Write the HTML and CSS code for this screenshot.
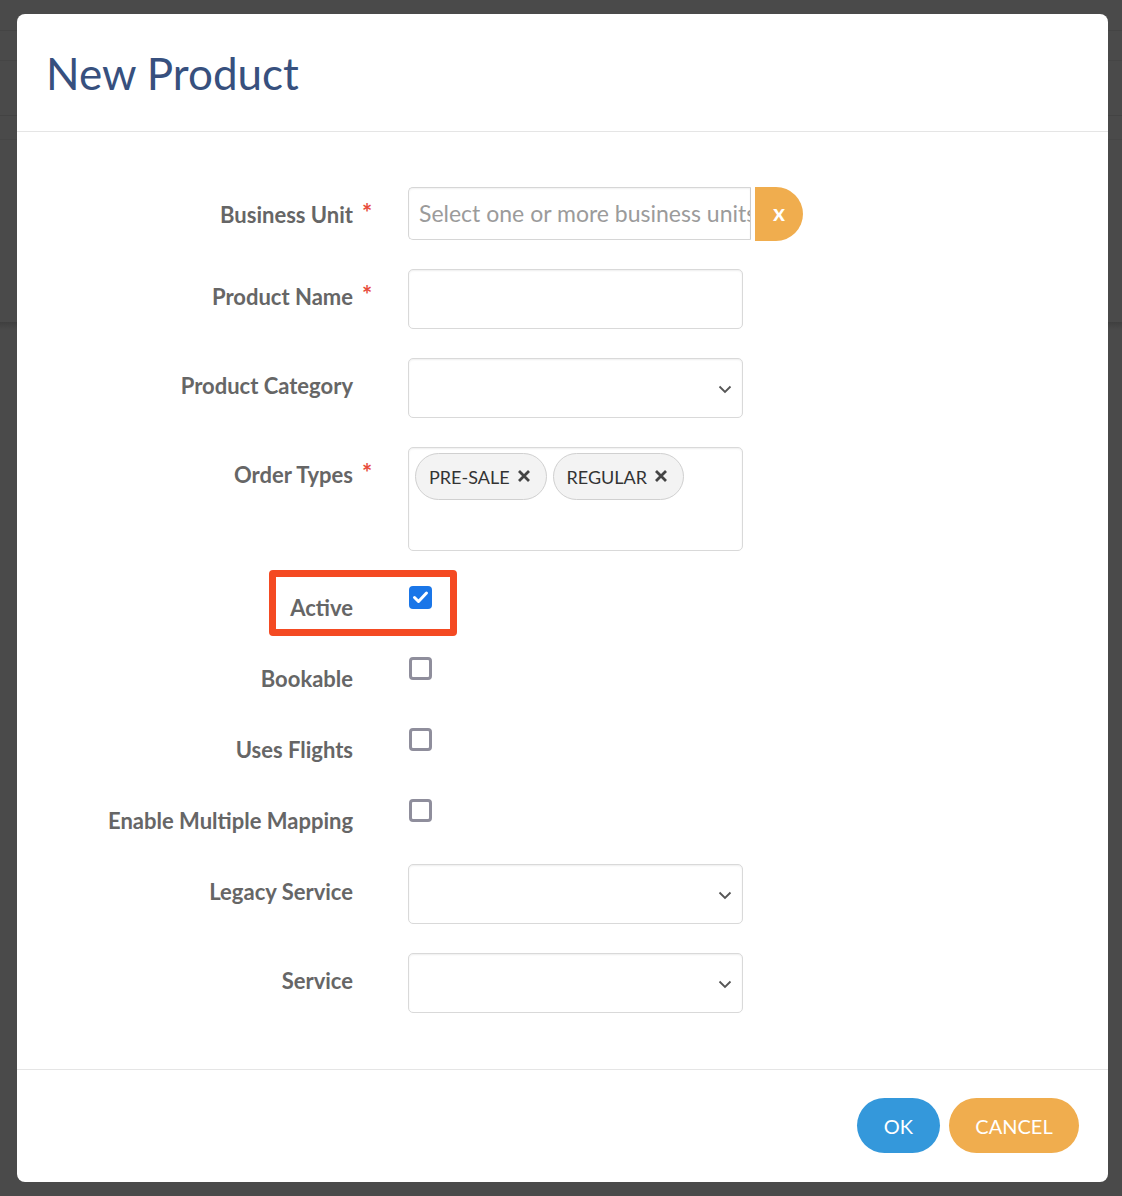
FILE: index.html
```html
<!DOCTYPE html>
<html lang="en">
<head>
  <meta charset="UTF-8">
  <meta name="viewport" content="width=device-width, initial-scale=1.0">
  <title>New Product</title>
  <link rel="stylesheet" href="styles.css">
</head>
<body>

<div class="modal">
  <div class="modal-header">
    <h1 class="modal-title">New Product</h1>
  </div>

  <div class="modal-body">
    <div class="form-row row-bu">
      <label class="form-label">Business Unit</label>
      <span class="req">*</span>
      <div class="bu-group">
        <div class="bu-input">Select one or more business units</div>
        <button class="bu-clear">x</button>
      </div>
    </div>

    <div class="form-row">
      <label class="form-label">Product Name</label>
      <span class="req">*</span>
      <div class="text-input"></div>
    </div>

    <div class="form-row">
      <label class="form-label">Product Category</label>
      <span class="req"></span>
      <div class="text-input select">
        <svg class="chevron" width="14" height="9" viewBox="0 0 14 9"><path d="M1.5 1.5 L7 7 L12.5 1.5" fill="none" stroke="#555" stroke-width="1.8"/></svg>
      </div>
    </div>

    <div class="form-row">
      <label class="form-label">Order Types</label>
      <span class="req">*</span>
      <div class="tags-input">
        <span class="tag">PRE-SALE <svg width="14" height="14" viewBox="0 0 14 14"><path d="M2 2 L12 12 M12 2 L2 12" stroke="#444" stroke-width="2.8"/></svg></span>
        <span class="tag">REGULAR <svg width="14" height="14" viewBox="0 0 14 14"><path d="M2 2 L12 12 M12 2 L2 12" stroke="#444" stroke-width="2.8"/></svg></span>
      </div>
    </div>

    <div class="form-row check-row highlight-row">
      <div class="highlight"></div>
      <label class="form-label">Active</label>
      <span class="req"></span>
      <span class="checkbox checked">
        <svg width="23" height="23" viewBox="0 0 23 23"><path d="M5.5 11.5 L9.5 15.5 L17.5 7" fill="none" stroke="#fff" stroke-width="3" stroke-linecap="round" stroke-linejoin="round"/></svg>
      </span>
    </div>

    <div class="form-row check-row">
      <label class="form-label">Bookable</label>
      <span class="req"></span>
      <span class="checkbox"></span>
    </div>

    <div class="form-row check-row">
      <label class="form-label">Uses Flights</label>
      <span class="req"></span>
      <span class="checkbox"></span>
    </div>

    <div class="form-row check-row">
      <label class="form-label">Enable Multiple Mapping</label>
      <span class="req"></span>
      <span class="checkbox"></span>
    </div>

    <div class="form-row">
      <label class="form-label">Legacy Service</label>
      <span class="req"></span>
      <div class="text-input select">
        <svg class="chevron" width="14" height="9" viewBox="0 0 14 9"><path d="M1.5 1.5 L7 7 L12.5 1.5" fill="none" stroke="#555" stroke-width="1.8"/></svg>
      </div>
    </div>

    <div class="form-row">
      <label class="form-label">Service</label>
      <span class="req"></span>
      <div class="text-input select">
        <svg class="chevron" width="14" height="9" viewBox="0 0 14 9"><path d="M1.5 1.5 L7 7 L12.5 1.5" fill="none" stroke="#555" stroke-width="1.8"/></svg>
      </div>
    </div>
  </div>

  <div class="modal-footer">
    <button class="btn btn-ok">OK</button>
    <button class="btn btn-cancel">CANCEL</button>
  </div>
</div>

</body>
</html>
```

FILE: styles.css
```css
body {
  margin: 0;
  padding: 0;
  font-family: Lato, "Open Sans", Arial, sans-serif;
  background-color: #4a4a4a;
  background-image:
    linear-gradient(#444, #444),
    linear-gradient(#454545, #454545),
    linear-gradient(#434343, #434343),
    linear-gradient(#464646, #464646),
    linear-gradient(#3f3f3f, #4a4a4a);
  background-size: 100% 1px, 100% 1px, 100% 1px, 100% 1px, 100% 8px;
  background-position: 0 30px, 0 60px, 0 115px, 0 139px, 0 322px;
  background-repeat: no-repeat;
  height: 1196px;
  overflow: hidden;
}
.modal {
  margin: 14px 14px 0 17px;
  width: 1091px;
  height: 1168px;
  background: #fff;
  border-radius: 8px;
  display: flex;
  flex-direction: column;
}
.modal-header {
  border-bottom: 1px solid #e5e5e5;
  padding-left: 29px;
  box-sizing: border-box;
  height: 118px;
}
.modal-title {
  margin: 0;
  padding-top: 33px;
  font-size: 44px;
  line-height: 52px;
  font-weight: 400;
  color: #37507e;
}
.modal-body {
  padding-top: 55px;
  flex: 1;
}
.form-row {
  display: flex;
  align-items: flex-start;
  margin-bottom: 29px;
  position: relative;
}
.form-row:last-child {
  margin-bottom: 0;
}
.form-label {
  width: 336px;
  text-align: right;
  font-size: 22px;
  line-height: 26px;
  padding-top: 15px;
  font-weight: 700;
  color: #666;
}
.req {
  width: 55px;
  padding-left: 9px;
  box-sizing: border-box;
  color: #e74c3c;
  font-size: 24px;
  font-weight: 700;
  line-height: 24px;
  padding-top: 14px;
}
.bu-group {
  display: flex;
  height: 53px;
}
.bu-input {
  width: 343px;
  height: 53px;
  box-sizing: border-box;
  border: 1px solid #d6d6d6;
  border-right-color: #ccc;
  border-radius: 5px 0 0 5px;
  padding: 0 0 0 10px;
  font-size: 23px;
  line-height: 51px;
  color: #9b9b9b;
  white-space: nowrap;
  overflow: hidden;
  box-shadow: inset 0 1px 2px rgba(0,0,0,0.06);
}
.bu-clear {
  margin-left: 4px;
  width: 48px;
  height: 54px;
  border: none;
  background: #f0ad4e;
  color: #fff;
  font-family: Lato, Arial, sans-serif;
  font-weight: 700;
  font-size: 23px;
  border-radius: 0 27px 27px 0;
  padding: 0 0 4px 0;
}
.text-input {
  width: 335px;
  height: 60px;
  box-sizing: border-box;
  border: 1px solid #d9d9d9;
  border-radius: 5px;
  box-shadow: inset 0 1px 2px rgba(0,0,0,0.07);
  position: relative;
}
.select .chevron {
  position: absolute;
  right: 10px;
  top: 26px;
}
.tags-input {
  width: 335px;
  height: 104px;
  box-sizing: border-box;
  border: 1px solid #d9d9d9;
  border-radius: 5px;
  box-shadow: inset 0 1px 2px rgba(0,0,0,0.07);
  padding: 5px 6px;
  display: flex;
  align-items: flex-start;
  gap: 6px;
}
.tag {
  display: inline-flex;
  align-items: center;
  gap: 7px;
  height: 47px;
  box-sizing: border-box;
  padding: 0 15px 0 13px;
  border: 1px solid #d0d0d0;
  border-radius: 24px;
  background: #f3f3f3;
  color: #333;
  font-size: 18px;
}
.tag svg {
  margin-top: -2px;
}
.check-row {
  height: 42px;
}
.checkbox {
  margin-top: 6px;
  margin-left: 1px;
  width: 23px;
  height: 23px;
  box-sizing: border-box;
  border: 3px solid #8f8e9c;
  border-radius: 4px;
  display: block;
}
.checkbox.checked {
  border: none;
  background: #1a76e8;
}
.checkbox svg {
  display: block;
}
.highlight {
  position: absolute;
  left: 252px;
  top: -10px;
  width: 188px;
  height: 66px;
  box-sizing: border-box;
  border: 7px solid #f44a22;
  border-radius: 4px;
}
.modal-footer {
  border-top: 1px solid #e5e5e5;
  height: 113px;
  box-sizing: border-box;
  padding: 28px 29px 0 0;
  display: flex;
  justify-content: flex-end;
  align-items: flex-start;
  gap: 9px;
}
.btn {
  height: 55px;
  border: none;
  border-radius: 28px;
  color: #fff;
  font-family: Lato, Arial, sans-serif;
  font-size: 20px;
  cursor: pointer;
}
.btn-ok {
  width: 83px;
  background: #3498db;
}
.btn-cancel {
  width: 130px;
  background: #f0ad4e;
}
```
